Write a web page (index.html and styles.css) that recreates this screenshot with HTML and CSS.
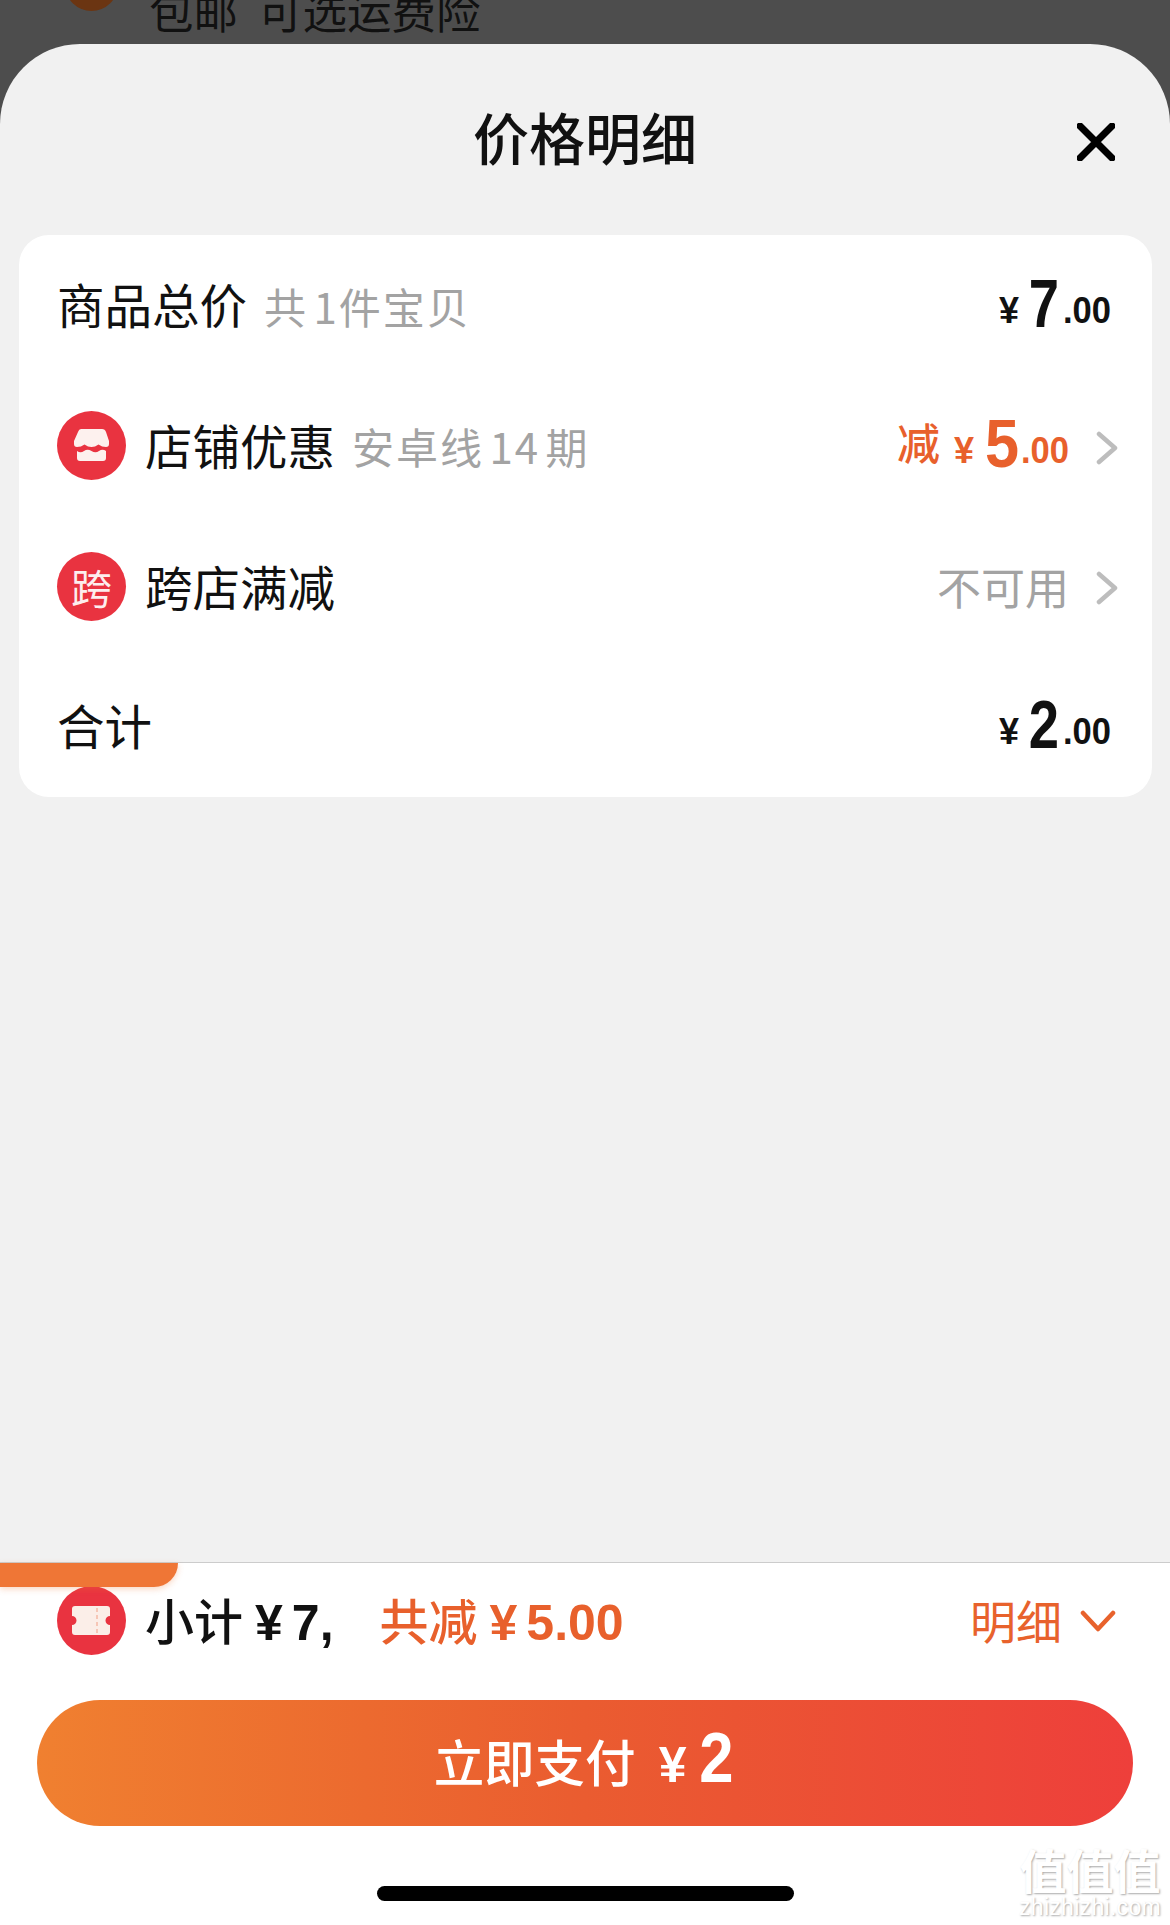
FILE: index.html
```html
<!DOCTYPE html>
<html lang="zh-CN">

<head>
  <meta charset="UTF-8">
  <meta name="viewport" content="width=device-width, initial-scale=1.0">
  <title>价格明细</title>
  <link rel="stylesheet" href="styles.css">
</head>

<body>
  <div class="behind">
    <div class="behind-avatar"></div>
    <div class="behind-text">包邮&nbsp;&nbsp;可选运费险</div>
  </div>

  <div class="sheet">
    <div class="sheet-head">
      <h2>价格明细</h2>
      <svg class="close" viewBox="0 0 38 38">
        <path d="M3 3L35 35M35 3L3 35" fill="none" stroke="#000" stroke-width="7" stroke-linecap="round" />
      </svg>
    </div>

    <div class="card">
      <div class="row">
        <span class="label">商品总价</span>
        <span class="sub">共 1件宝贝</span>
        <span class="price"><i>¥</i><b>7</b><em>.00</em></span>
      </div>
      <div class="row">
        <svg class="badge" viewBox="0 0 69 69">
          <circle cx="34.5" cy="34.5" r="34.5" fill="#e93340" />
          <path d="M24 18H45q3 0 4 3L52 30V33q0 3-3 3q-4 0-7.500-2.500q-3.500 2.500-7 2.500t-7-2.500q-3.500 2.500-7.500 2.500q-3 0-3-3V30L21 21q1-3 3-3Z" fill="#fdf1ee" />
          <path d="M20 40q3.500 2.500 7 0t7.500 0t7.500 0t7 0V47q0 3-3 3H23q-3 0-3-3Z" fill="#fdf1ee" />
        </svg>
        <span class="label">店铺优惠</span>
        <span class="sub">安卓线 14 期</span>
        <span class="price orange"><span class="minus">减</span><i>¥</i><b>5</b><em>.00</em></span>
        <svg class="arrow" viewBox="0 0 22 34">
          <path d="M3 3L19 17L3 31" fill="none" stroke="#bdbdbd" stroke-width="4.500" stroke-linecap="round" stroke-linejoin="round" />
        </svg>
      </div>
      <div class="row">
        <div class="badge badge-text">跨</div>
        <span class="label">跨店满减</span>
        <span class="none">不可用</span>
        <svg class="arrow" viewBox="0 0 22 34">
          <path d="M3 3L19 17L3 31" fill="none" stroke="#bdbdbd" stroke-width="4.500" stroke-linecap="round" stroke-linejoin="round" />
        </svg>
      </div>
      <div class="row">
        <span class="label">合计</span>
        <span class="price"><i>¥</i><b>2</b><em>.00</em></span>
      </div>
    </div>

    <div class="footer">
      <div class="tab"></div>
      <div class="summary">
        <svg class="badge" viewBox="0 0 69 69">
          <circle cx="34.5" cy="34.5" r="34.5" fill="#e93340" />
          <path d="M18 20H50q3 0 3 3V30a4.500 4.500 0 0 0 0 9V46q0 3-3 3H18q-3 0-3-3V39a4.500 4.500 0 0 0 0-9V23q0-3 3-3Z" fill="#fbeee8" />
          <path d="M40 22V48" stroke="#f6c6b6" stroke-width="2" stroke-dasharray="4 3" />
        </svg>
        <span class="subtotal">小计<span class="yen">¥</span><span class="num">7,</span></span>
        <span class="saved">共减<span class="yen">¥</span><span class="num">5.00</span></span>
        <span class="detail">明细</span>
        <svg class="chevron" viewBox="0 0 36 24">
          <path d="M3 4L18 20L33 4" fill="none" stroke="#e8622c" stroke-width="4.500" stroke-linecap="round" stroke-linejoin="round" />
        </svg>
      </div>
      <button class="pay">立即支付<i>¥</i><b>2</b></button>
      <div class="home-bar"></div>
      <div class="watermark">
        <div class="wm-cn">值值值</div>
        <div class="wm-en">zhizhizhi.com</div>
      </div>
    </div>
  </div>
</body>

</html>
```

FILE: styles.css
```css
* {
  box-sizing: border-box;
}

body {
  margin: 0;
  width: 1170px;
  height: 1925px;
  overflow: hidden;
  background-color: #4d4d4d;
  font-family: "Noto Sans CJK SC", sans-serif;
  color: #111;
}

i,
em {
  font-style: normal;
}

/* page under the sheet, cut off at the top */
.behind {
  height: 44px;
  overflow: hidden;
  display: flex;
}

.behind-avatar {
  width: 53px;
  height: 53px;
  margin: -42px 0 0 65px;
  border-radius: 50%;
  background-color: #6b3512;
}

.behind-text {
  margin: -20px 0 0 31px;
  font-size: 44.500px;
  line-height: 60px;
  color: #111;
}

.sheet {
  height: 1881px;
  display: flex;
  flex-direction: column;
  background-color: #f1f1f1;
  border-radius: 80px 80px 0 0;
}

.sheet-head {
  height: 191px;
  position: relative;
  display: flex;
  justify-content: center;
  padding-top: 58px;
}

.sheet-head h2 {
  margin: 0;
  font-size: 56px;
  line-height: 68px;
  font-weight: 500;
}

.close {
  position: absolute;
  left: 1077px;
  top: 79px;
  width: 38px;
  height: 38px;
}

.card {
  margin: 0 18px 0 19px;
  height: 562px;
  padding: 0 41px 0 38px;
  background-color: #fff;
  border-radius: 30px;
}

.row {
  height: 140.500px;
  display: flex;
  align-items: center;
}

.label {
  font-size: 47.500px;
  line-height: 60px;
  padding-bottom: 2px;
}

.row:nth-child(3) .label {
  padding-bottom: 0;
}

.row:last-child .label {
  padding-bottom: 3px;
}

.badge {
  width: 69px;
  height: 69px;
  margin-right: 19px;
  flex: none;
}

.badge-text {
  border-radius: 50%;
  background-color: #e93340;
  color: #fdeeee;
  font-size: 41px;
  line-height: 69px;
  text-align: center;
}

.sub {
  margin-left: 17px;
  font-size: 42px;
  letter-spacing: 2px;
  word-spacing: -6px;
  color: #a3a3a3;
  white-space: pre;
}

.none {
  margin-left: auto;
  font-size: 44px;
  color: #a3a3a3;
}

.price {
  margin-left: auto;
  padding-bottom: 13px;
  display: flex;
  align-items: baseline;
  font-family: "Liberation Sans", sans-serif;
  font-weight: 700;
}

.price i {
  font-size: 36px;
  margin-right: 6px;
}

.price b {
  font-size: 68px;
  line-height: 70px;
  transform: translateY(4px) scaleX(.8);
}

.price em {
  font-size: 36px;
  margin-left: -2px;
  transform: scaleX(.96);
  transform-origin: right;
}

.orange {
  color: #e8602c;
}

.orange i {
  margin-right: 9px;
}

.orange b {
  transform: translateY(4px) scaleX(.9);
}

.minus {
  font-family: "Noto Sans CJK SC", sans-serif;
  font-weight: 500;
  font-size: 43px;
  margin-right: 14px;
  transform: translateY(-3px);
}

.arrow {
  width: 22px;
  height: 34px;
  margin: 4px -7px 0 27px;
}

.footer {
  flex: 1;
  position: relative;
  display: flex;
  flex-direction: column;
  align-items: center;
  background-color: #fff;
  border-top: 1px solid #ccc;
  margin-top: 765px;
}

.tab {
  position: absolute;
  left: 0;
  top: 0;
  width: 178px;
  height: 24px;
  background-color: #ef7636;
  border-radius: 0 0 24px 0;
  box-shadow: 0 2px 6px rgba(239, 118, 54, .3);
}

.summary {
  width: 100%;
  height: 69px;
  margin-top: 23px;
  padding: 0 54px 0 57px;
  display: flex;
  align-items: center;
}

.subtotal,
.saved {
  padding-bottom: 4px;
  font-size: 49px;
  font-weight: 500;
}

.yen {
  margin: 0 9px 0 12px;
  font-family: "Liberation Sans", sans-serif;
  font-weight: 700;
  font-size: 50px;
}

.num {
  font-family: "Liberation Sans", sans-serif;
  font-weight: 700;
  font-size: 50px;
}

.saved {
  margin-left: 46px;
  color: #e8602c;
}

.detail {
  margin-left: auto;
  padding-bottom: 4px;
  font-size: 46px;
  color: #e8622c;
}

.chevron {
  width: 36px;
  height: 24px;
  margin-left: 18px;
}

.pay {
  width: 1096px;
  height: 126px;
  margin-top: 45px;
  padding: 23px 0 0;
  border: none;
  border-radius: 63px;
  display: flex;
  align-items: baseline;
  justify-content: center;
  background: linear-gradient(90deg, #f08030, #ec6a2f 30%, #ea5c30 50%, #ee3f3b);
  color: #fff;
  font-family: "Noto Sans CJK SC", sans-serif;
  font-size: 50.500px;
  font-weight: 500;
}

.pay i {
  margin-left: 23px;
  font-family: "Liberation Sans", sans-serif;
  font-weight: 700;
  font-size: 50px;
}

.pay b {
  margin-left: 11px;
  font-family: "Liberation Sans", sans-serif;
  font-size: 70px;
  line-height: 1;
  transform: scaleX(.88);
}

.home-bar {
  width: 417px;
  height: 15px;
  margin-top: 60px;
  border-radius: 8px;
  background-color: #000;
}

.watermark {
  position: absolute;
  right: 7px;
  bottom: 6px;
  width: 146px;
  text-align: center;
  color: #fff;
  text-shadow: 1px 1px 2px #aaa;
}

.wm-cn {
  font-size: 47px;
  line-height: 52px;
  font-weight: 700;
}

.wm-en {
  font-family: "Liberation Sans", sans-serif;
  font-size: 23px;
  line-height: 24px;
  letter-spacing: .3px;
}
```
